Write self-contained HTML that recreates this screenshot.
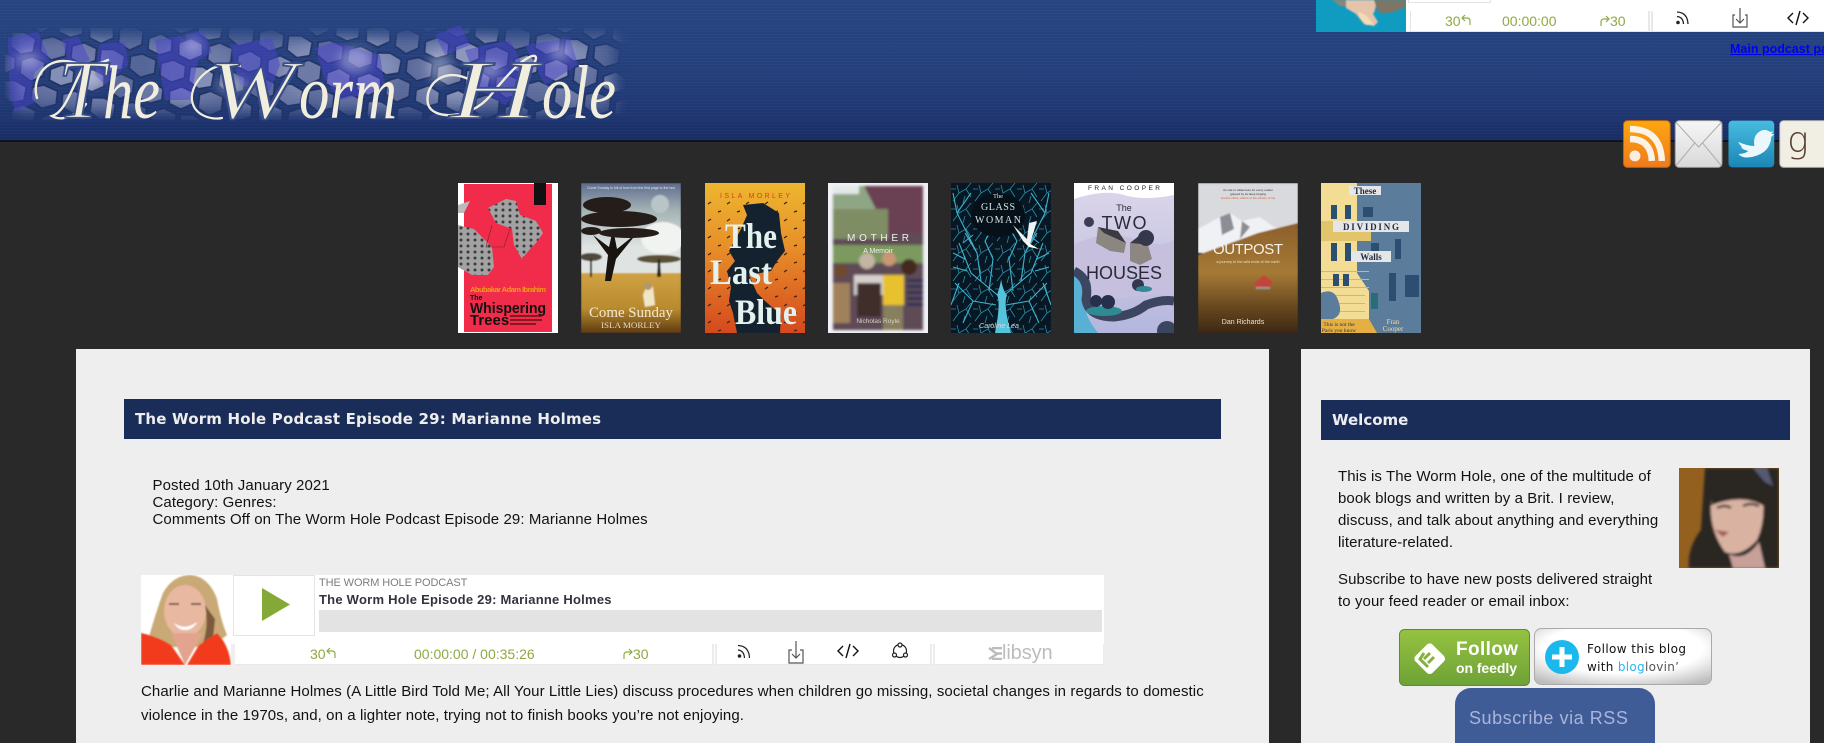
<!DOCTYPE html>
<html style="overflow:hidden;height:743px"><head><meta charset="utf-8"><title>The Worm Hole</title>
<style>
html,body{margin:0;padding:0}
body{width:1824px;height:743px;overflow:hidden;background:#292929;font-family:"Liberation Sans",Arial,sans-serif;color:#111}
#w{position:relative;width:1824px;height:743px;overflow:hidden}
.a{position:absolute}
.t{position:absolute;white-space:nowrap}
#hd{left:0;top:0;width:1824px;height:140px;background:repeating-linear-gradient(0deg,rgba(255,255,255,.018) 0 1px,rgba(0,0,0,.018) 1px 3px),linear-gradient(#284584 0,#26427f 40%,#213a76 75%,#1a2d66 100%);border-bottom:2px solid #0b1226}
.panel{background:#eee;top:349px;height:394px}
.bar{background:#1a2c58;color:#eee;font:bold 15px "DejaVu Sans",Verdana,sans-serif;height:40px;line-height:40px}
.ctl{color:#8fa944;font:14px "Liberation Sans",Arial,sans-serif}
.m{font-size:15px;line-height:17px;letter-spacing:.09px}
.p{font-size:15px;line-height:24px;letter-spacing:.09px}
.s{font-size:15px;line-height:22px;letter-spacing:.09px}
</style></head><body><div id="w">

<div class="a" id="hd"></div>

<svg class="a" style="left:0;top:0" width="700" height="140" viewBox="0 0 700 140">
<defs>
<pattern id="m" width="81" height="44" patternUnits="userSpaceOnUse" patternTransform="rotate(11) scale(1.120)">
<g stroke="#222d5a" stroke-width="1.500">
<polygon points="2,7 12,1 23,4 25,14 15,21 4,18" fill="#a3a9c8"/>
<polygon points="29,5 38,0 50,3 51,15 41,22 30,17" fill="#7f88b0"/>
<polygon points="56,8 66,2 77,6 78,16 68,21 57,18" fill="#969ec2"/>
<polygon points="-10,28 0,23 12,26 13,37 2,43 -9,39" fill="#8089b0"/>
<polygon points="71,28 81,23 93,26 94,37 83,43 72,39" fill="#8089b0"/>
<polygon points="16,26 27,24 38,28 38,40 27,44 17,39" fill="#9aa1c4"/>
<polygon points="43,27 53,23 66,26 67,38 55,44 44,38" fill="#747eaa"/>
</g>
</pattern>
<filter id="b"><feGaussianBlur stdDeviation="7"/></filter>
<filter id="b2"><feGaussianBlur stdDeviation="5"/></filter>
<filter id="p1"><feGaussianBlur stdDeviation=".7"/></filter>
<filter id="p2"><feGaussianBlur stdDeviation="1.200"/></filter>
<mask id="mk">
<g filter="url(#b)" fill="#fff">
<rect x="14" y="36" width="600" height="76" opacity=".6"/>
<ellipse cx="60" cy="68" rx="50" ry="32" opacity=".6"/>
<ellipse cx="195" cy="70" rx="40" ry="32" opacity=".55"/>
<ellipse cx="340" cy="70" rx="60" ry="30" opacity=".55"/>
<ellipse cx="470" cy="70" rx="60" ry="30" opacity=".6"/>
<ellipse cx="555" cy="65" rx="40" ry="24" opacity=".5"/>
</g>
</mask>
<clipPath id="cl"><rect x="5" y="24" width="625" height="104"/></clipPath>
</defs>
<g clip-path="url(#cl)">
<rect width="650" height="135" fill="url(#m)" mask="url(#mk)"/>
<g fill="#4a44cc" opacity=".5">
<polygon points="8,38 38,32 50,60 35,72 30,95 10,100"/>
<polygon points="8,82 30,80 35,102 15,112"/>
<polygon points="62,40 78,36 90,60 70,70"/>
<polygon points="100,44 125,42 128,65 105,85 95,75"/>
<polygon points="155,40 180,36 200,50 190,100 165,100"/>
<polygon points="185,35 203,30 212,52 195,62"/>
<polygon points="230,45 272,38 280,65 270,90 240,85"/>
<polygon points="315,48 335,42 380,55 385,90 340,100 325,80"/>
<polygon points="435,35 460,25 470,45 445,55"/>
<polygon points="465,50 510,40 530,80 505,105 480,90"/>
<polygon points="525,45 570,38 578,65 545,85"/>
</g>
<g fill="#dfe0f0" opacity=".4" filter="url(#b2)">
<ellipse cx="28" cy="60" rx="12" ry="8"/><ellipse cx="90" cy="78" rx="12" ry="8"/>
<ellipse cx="193" cy="45" rx="9" ry="7"/><ellipse cx="232" cy="85" rx="15" ry="8"/>
<ellipse cx="355" cy="60" rx="16" ry="12"/><ellipse cx="440" cy="68" rx="12" ry="14"/>
<ellipse cx="490" cy="70" rx="12" ry="8"/><ellipse cx="560" cy="52" rx="10" ry="9"/>
</g>
</g>
<g fill="none" stroke="#f1eedd" stroke-linecap="round">
<path d="M37 98C32 82 42 62 62 61C74 60 88 70 108 60" stroke-width="2.400"/>
<path d="M85 64C72 86 66 112 52 116C62 122 78 115 86 104" stroke-width="2.400"/>
<path d="M240 66C215 58 190 80 192 100C194 116 212 120 222 118" stroke-width="2.200"/>
<path d="M470 80C445 66 424 84 428 104C432 120 470 120 490 96C505 78 520 60 532 56C540 54 535 66 525 72" stroke-width="2.400"/>
</g>
<g fill="#f1eedd" font-family="'Liberation Serif',serif" font-style="italic" font-size="76">
<text x="103" y="118" textLength="57" lengthAdjust="spacingAndGlyphs">he</text>
<text x="299" y="118" textLength="98" lengthAdjust="spacingAndGlyphs">orm</text>
<text x="542" y="118" textLength="74" lengthAdjust="spacingAndGlyphs">ole</text>
</g>
<g fill="#f1eedd" stroke="#3a4f8a" stroke-width="1.800" font-family="'Liberation Serif',serif" font-style="italic" font-size="84">
<text x="58" y="118">T</text>
<text x="208" y="118" textLength="88" lengthAdjust="spacingAndGlyphs">W</text>
<text x="450" y="118" textLength="88" lengthAdjust="spacingAndGlyphs">H</text>
</g>
</svg>

<!-- top player -->
<div class="a" style="left:1406px;top:0;width:418px;height:32px;background:#fff;border-bottom:1px solid #e6e6e6;box-sizing:border-box"></div>
<div class="a" style="left:1408px;top:-1px;width:81px;height:2px;border:1px solid #e3e3e3;background:#fff"></div>
<div class="a" style="left:1410px;top:11px;width:1px;height:21px;background:#e3e3e3"></div>
<div class="a" style="left:1648px;top:11px;width:2px;height:21px;background:#e8e8e8"></div>
<div class="a" style="left:1651px;top:11px;width:2px;height:21px;background:#e8e8e8"></div>
<svg class="a" style="left:1316px;top:0" width="90" height="32" viewBox="0 0 90 32">
<rect width="90" height="32" fill="#0f9cc0"/>
<g filter="url(#p1)">
<path d="M16 0H42L36 7 24 6Z" fill="#8b8576"/>
<path d="M30 0H60Q60 10 57 14L62 22 58 26 48 24 40 14 30 8Z" fill="#e6c4ac"/>
<path d="M42 12Q50 14 54 20L58 25 50 25 44 18Z" fill="#f4dcb4"/>
<path d="M58 0H90V6Q74 16 62 12Z" fill="#7f7565"/>
</g>
</svg>
<span class="t ctl" style="left:1445px;top:13px">30</span>
<svg class="a" style="left:1460px;top:14px" width="12" height="14" fill="none" stroke="#8fa944" stroke-width="1.200"><path d="M5 1L2 4 5 7M2 4H7Q10 4 10 7V11"/></svg>
<span class="t ctl" style="left:1502px;top:13px">00:00:00</span>
<svg class="a" style="left:1599px;top:14px" width="12" height="14" fill="none" stroke="#8fa944" stroke-width="1.200"><path d="M7 2L10 5 7 8M10 5H5Q2 5 2 8V12"/></svg>
<span class="t ctl" style="left:1610px;top:13px">30</span>
<svg class="a" style="left:1670px;top:4px" width="154" height="28" fill="none" stroke="#222" stroke-width="1.200">
<circle cx="8" cy="18.500" r="1.800" fill="#222" stroke="none"/><path d="M7 12.500Q13 13 13.500 20M7 8Q17.500 8.500 18 20" stroke-width="1.300"/>
<path d="M65 11H63V23H77V11H75M70 4V19M66 15L70 19 74 15" stroke="#555"/>
<path d="M123 9L118 14 123 19M133 9L138 14 133 19M130 7L126 21" stroke="#111" stroke-width="1.400"/>
</svg>

<a class="t" href="#" style="left:1730px;top:42px;color:#00e;font:bold 12.500px 'Liberation Sans',Arial,sans-serif;text-decoration:underline">Main podcast page</a>

<!-- social icons -->
<svg class="a" style="left:1623px;top:120px" width="201" height="48" viewBox="0 0 202 48">
<defs>
<linearGradient id="or" x1="0" y1="0" x2="0" y2="1"><stop offset="0" stop-color="#fda70f"/><stop offset="1" stop-color="#ef7a1d"/></linearGradient>
<linearGradient id="ml" x1="0" y1="0" x2="0" y2="1"><stop offset="0" stop-color="#f6f6f6"/><stop offset="1" stop-color="#d9d9d9"/></linearGradient>
<linearGradient id="tw" x1="0" y1="0" x2="0" y2="1"><stop offset="0" stop-color="#48bcdf"/><stop offset="1" stop-color="#1b86b6"/></linearGradient>
</defs>
<rect x=".5" y=".5" width="47" height="47" rx="4" fill="url(#or)" stroke="#b9650f"/>
<circle cx="12" cy="36" r="5.500" fill="#fbeee0"/>
<path d="M7 19Q28 19 29 41M7 9Q38 9 39 41" fill="none" stroke="#fbf3e6" stroke-width="6.500"/>
<rect x="52.500" y=".5" width="47" height="47" rx="4" fill="url(#ml)" stroke="#999"/>
<path d="M53 2L76 27 99 2M53 46L72 23M99 46L80 23" fill="none" stroke="#aaa"/>
<rect x="106" y=".5" width="46" height="47" rx="4" fill="url(#tw)"/>
<path d="M116 22Q125 26 132 26Q130 14 140 10 144 9 148 12L151 11 149 14 152 14 149 17Q148 33 130 37 120 39 116 34 122 34 126 31 118 29 119 26 117 25 116 22Z" fill="#eaf8fc"/>
<rect x="157.500" y=".5" width="50" height="47" rx="4" fill="#f1efe4" stroke="#aaa"/>
<text x="165" y="32" font-family="'DejaVu Sans',sans-serif" font-size="36" font-weight="200" fill="#5a3f2e">g</text>
</svg>

<!-- books -->
<svg class="a" style="left:458px;top:183px" width="100" height="150" viewBox="0 0 100 150">
<defs><pattern id="bf" width="7" height="6" patternUnits="userSpaceOnUse"><rect width="7" height="6" fill="#a2a2a2"/><circle cx="3" cy="3" r="1.500" fill="#3c3c3c"/></pattern></defs>
<rect width="100" height="150" fill="#fff"/><rect x="6" y="1" width="88" height="148" fill="#f12c4a"/>
<rect x="76" y="0" width="12" height="22" fill="#111"/>
<path d="M30 25L48 16 58 18 62 32 78 38 85 50 78 60 72 66 64 76 56 62 54 46 38 40Z" fill="url(#bf)"/>
<path d="M0 42L16 46 34 64 36 84 30 92 14 92 0 84Z" fill="url(#bf)"/>
<path d="M0 22L12 18 6 30 0 30Z" fill="#bbb"/>
<path d="M34 42L28 64 46 64 52 46" fill="none" stroke="#7b2030" stroke-width=".6"/>
<text x="12" y="109" font-size="7.600" fill="#f59a1d" font-weight="bold" textLength="76">Abubakar Adam Ibrahim</text>
<text x="12" y="117" font-size="7" font-weight="bold" fill="#111">The</text>
<text x="12" y="130" font-size="15" font-weight="bold" fill="#111" textLength="76" lengthAdjust="spacingAndGlyphs">Whispering</text>
<text x="12" y="142" font-size="15" font-weight="bold" fill="#111">Trees</text>
<g stroke="#611" stroke-width="1.500"><path d="M52 133H84M52 137H84M52 141H78"/></g>
</svg>

<svg class="a" style="left:581px;top:183px" width="100" height="150" viewBox="0 0 100 150">
<defs><linearGradient id="s2" x1="0" y1="0" x2="0" y2="1"><stop offset="0" stop-color="#5d6c8e"/><stop offset=".3" stop-color="#a4b3b5"/><stop offset=".7" stop-color="#dfe4e2"/></linearGradient>
<linearGradient id="g2" x1="0" y1="0" x2="0" y2="1"><stop offset="0" stop-color="#d0a243"/><stop offset=".6" stop-color="#b88a2e"/><stop offset="1" stop-color="#5e3a12"/></linearGradient></defs>
<g filter="url(#p1)">
<rect width="100" height="92" fill="url(#s2)"/><circle cx="79" cy="21" r="9" fill="#b9c4c6"/>
<ellipse cx="82" cy="55" rx="22" ry="16" fill="#f1f3f1"/>
<rect y="90" width="100" height="60" fill="url(#g2)"/>
<ellipse cx="78" cy="76" rx="22" ry="4" fill="#5c5039"/><path d="M77 76H79L80 94H76Z" fill="#2a2018"/>
<ellipse cx="10" cy="74" rx="11" ry="4" fill="#4e493c"/><path d="M9 76H11L11 94H9Z" fill="#2a2018"/>
<path d="M62 112L66 102 72 104 74 122 64 124Z" fill="#f0e7c6"/><circle cx="67" cy="103" r="4" fill="#b09968"/>
</g>
<path d="M24 98L27 72 12 52 28 64 32 46 36 66 56 50 35 76 30 98Z" fill="#1a1410"/>
<g fill="#241d19"><ellipse cx="26" cy="22" rx="24" ry="8"/><ellipse cx="38" cy="36" rx="38" ry="8"/><ellipse cx="48" cy="50" rx="30" ry="5"/><ellipse cx="10" cy="48" rx="10" ry="4"/></g>
<text x="50" y="134" text-anchor="middle" font-family="'Liberation Serif',serif" font-size="14.500" fill="#f4ead4" textLength="84" lengthAdjust="spacingAndGlyphs">Come Sunday</text>
<text x="50" y="145" text-anchor="middle" font-family="'Liberation Serif',serif" font-size="8" fill="#e6d7bd" textLength="60" lengthAdjust="spacingAndGlyphs">ISLA MORLEY</text>
<text x="50" y="6" text-anchor="middle" font-size="3.500" fill="#e5e5e5">Come Sunday is full of love from the first page to the last</text>
</svg>

<svg class="a" style="left:705px;top:183px" width="100" height="150" viewBox="0 0 100 150">
<defs><linearGradient id="o3" x1="0" y1="0" x2="0" y2="1"><stop offset="0" stop-color="#edb62f"/><stop offset=".4" stop-color="#e8922a"/><stop offset="1" stop-color="#d5491d"/></linearGradient>
<pattern id="sp" width="19" height="17" patternUnits="userSpaceOnUse"><path d="M3 4L6 2M13 12L16 11" stroke="#3a2416" stroke-width="1.300"/></pattern></defs>
<rect width="100" height="150" fill="url(#o3)"/><rect y="18" width="100" height="132" fill="url(#sp)"/>
<path d="M38 22L58 20 74 30 76 50 80 68 72 78 66 88 44 92 52 110 60 118 76 132 75 150 32 150 28 130 24 118 26 104 22 88 30 78 24 68 36 46 42 32Z" fill="#14212e"/>
<text x="50" y="15" text-anchor="middle" font-size="7" fill="#d5401c" textLength="70">ISLA MORLEY</text>
<g font-family="'Liberation Serif',serif" fill="#e3f1ef" font-weight="bold"><text x="20" y="65" font-size="36" textLength="52" lengthAdjust="spacingAndGlyphs">The</text>
<text x="5" y="101" font-size="36" textLength="62" lengthAdjust="spacingAndGlyphs">Last</text>
<text x="30" y="141" font-size="36" textLength="62" lengthAdjust="spacingAndGlyphs">Blue</text></g>
</svg>

<svg class="a" style="left:828px;top:183px" width="100" height="150" viewBox="0 0 100 150">
<rect width="100" height="150" fill="#eff1f6"/>
<g filter="url(#p2)">
<rect x="5" y="3" width="90" height="144" fill="#5f4c57"/>
<rect x="5" y="3" width="90" height="24" fill="#8fa684"/><rect x="5" y="3" width="26" height="8" fill="#e3e9e8"/>
<path d="M36 3H95V50H60Z" fill="#6a4152"/>
<rect x="5" y="26" width="55" height="30" fill="#7f8d65"/>
<rect x="5" y="62" width="90" height="18" fill="#7c9a5e"/>
<circle cx="13" cy="88" r="7" fill="#6e4a32"/><circle cx="39" cy="78" r="8" fill="#c2b5a4"/><circle cx="61" cy="76" r="7" fill="#c89774"/><circle cx="81" cy="84" r="8" fill="#43291e"/>
<rect x="5" y="100" width="17" height="40" fill="#a0815b"/><rect x="26" y="92" width="30" height="20" fill="#d5d0cc"/>
<rect x="29" y="100" width="24" height="34" fill="#3f2f2b"/><rect x="55" y="92" width="21" height="30" fill="#e8c22d"/><rect x="55" y="122" width="20" height="25" fill="#887f5e"/>
<g fill="#2c3358"><rect x="79" y="96" width="16" height="3"/><rect x="79" y="102" width="16" height="3"/><rect x="79" y="108" width="16" height="3"/><rect x="79" y="114" width="16" height="3"/><rect x="79" y="120" width="16" height="3"/></g>
</g>
<text x="50" y="58" text-anchor="middle" font-size="10" fill="#f2efec" textLength="62">MOTHER</text>
<text x="50" y="70" text-anchor="middle" font-size="7" fill="#f2efec">A Memoir</text>
<text x="50" y="140" text-anchor="middle" font-size="6.500" fill="#d6d1c4">Nicholas Royle</text>
</svg>

<svg class="a" style="left:951px;top:183px" width="100" height="150" viewBox="0 0 100 150">
<defs><pattern id="br" width="22" height="20" patternUnits="userSpaceOnUse"><path d="M2 18L8 10 6 2M8 10L15 6 20 0M15 6L20 14M12 20L14 13M0 6L5 6" fill="none" stroke="#2c8aa4" stroke-width=".8"/></pattern></defs>
<rect width="100" height="150" fill="#071824"/><rect width="100" height="150" fill="url(#br)"/>
<g fill="none" stroke="#3fb2cc" stroke-width="1.100">
<path d="M50 150L50 115 20 90 8 60M50 115L80 90 92 60M45 122L22 118 4 100M55 122L78 118 96 100M30 98L26 70 14 50M70 98L74 70 86 50M38 108L42 76 34 58M62 108L58 76 66 58M14 76L2 70M86 76L98 70M22 118L12 140M78 118L88 140M26 70L6 30 2 10M74 70L94 30 98 10"/>
<path d="M8 100L0 122M92 100L100 122M34 58L40 48M66 58L60 48M6 30L20 10M94 30L80 10M16 88L2 84M84 88L98 84M12 60L22 52M88 60L78 52"/>
</g>
<path d="M44 150Q50 120 46 112 50 100 50 96 52 108 56 112 52 122 60 150Z" fill="#55c3dc"/>
<ellipse cx="47" cy="32" rx="27" ry="22" fill="#051018"/>
<g text-anchor="middle" fill="#d9e4e6" font-family="'Liberation Serif',serif"><text x="47" y="15" font-size="6.500">The</text><text x="47" y="27" font-size="10" textLength="34">GLASS</text><text x="47" y="40" font-size="10" textLength="46">WOMAN</text></g>
<path d="M62 42L76 56 78 40 86 38 78 64 72 58Z" fill="#eef4f4"/><path d="M74 58L88 66 78 64Z" fill="#fff"/>
<text x="48" y="145" text-anchor="middle" font-size="7" font-style="italic" fill="#cfdde0">Caroline Lea</text>
</svg>

<svg class="a" style="left:1074px;top:183px" width="100" height="150" viewBox="0 0 100 150">
<defs><linearGradient id="l6" x1="0" y1="0" x2="0" y2="1"><stop offset="0" stop-color="#ddd7ea"/><stop offset="1" stop-color="#b4b6dd"/></linearGradient></defs>
<rect width="100" height="150" fill="url(#l6)"/><path d="M0 0H100V12Q70 18 50 12T0 16Z" fill="#fff"/>
<path d="M0 62Q30 46 60 56T100 56V110L0 118Z" fill="#c6c0de"/>
<path d="M0 86Q26 94 12 118 8 130 24 150H0Z" fill="#58b0d4"/>
<path d="M0 88Q16 96 12 116 14 134 40 134 60 132 72 122 88 116 100 118" fill="none" stroke="#3d4660" stroke-width="9"/>
<text x="50" y="7" text-anchor="middle" font-size="6.500" fill="#222" textLength="72">FRAN COOPER</text>
<text x="50" y="28" text-anchor="middle" font-size="9" fill="#2b2b36">The</text>
<text x="50" y="46" text-anchor="middle" font-size="18" fill="#2a2a3a" textLength="45">TWO</text>
<text x="50" y="96" text-anchor="middle" font-size="18" fill="#2a2a3a" textLength="76">HOUSES</text>
<path d="M24 44L44 54 52 60 50 70 36 68 22 60Z" fill="#8c8680"/><path d="M24 44L44 48 52 60 30 50Z" fill="#3a3a40"/>
<path d="M56 60L74 62 78 76 66 82 56 78Z" fill="#8d8683"/><path d="M56 60L66 52 76 62Z" fill="#3b3b41"/>
<circle cx="15" cy="39" r="5" fill="#3b3d50"/><circle cx="72" cy="55" r="8" fill="#35384a"/><circle cx="64" cy="102" r="6" fill="#33384f"/>
<ellipse cx="70" cy="106" rx="8" ry="3" fill="#2f8a94"/><ellipse cx="30" cy="128" rx="18" ry="5" fill="#2e8b94"/><circle cx="22" cy="118" r="6" fill="#27304a"/><circle cx="34" cy="119" r="7" fill="#27304a"/><circle cx="93" cy="148" r="10" fill="#3a4560"/>
</svg>

<svg class="a" style="left:1198px;top:183px" width="100" height="150" viewBox="0 0 100 150">
<defs><linearGradient id="g7" x1="0" y1="0" x2="0" y2="1"><stop offset="0" stop-color="#8c5f2a"/><stop offset=".45" stop-color="#a67a36"/><stop offset=".75" stop-color="#6a4a20"/><stop offset="1" stop-color="#3c2711"/></linearGradient></defs>
<g filter="url(#p1)">
<rect width="100" height="70" fill="#d9dadd"/>
<path d="M0 46L22 34 32 30 44 38 62 34 76 44 100 48V70H0Z" fill="#f0f1f4"/><path d="M22 34L32 30 36 46 24 52ZM44 38L52 44 42 56Z" fill="#8b8e94"/>
<path d="M0 72L60 50 100 40V150H0Z" fill="url(#g7)"/>
<path d="M56 100L66 92 74 98 74 103 58 105Z" fill="#c2453a"/><path d="M58 104H72V106H58Z" fill="#9c9a94"/>
</g>
<text x="50" y="71" text-anchor="middle" font-size="15" fill="#f4f3ee" textLength="70">OUTPOST</text>
<text x="50" y="80" text-anchor="middle" font-size="3.800" fill="#e6dccc">a journey to the wild ends of the earth</text>
<text x="50" y="8" text-anchor="middle" font-size="3" fill="#333">An ode to wilderness for every reader</text>
<text x="50" y="12" text-anchor="middle" font-size="3" fill="#333">gripped by its deep longing</text>
<text x="50" y="16" text-anchor="middle" font-size="3" fill="#d4622a">Horatio Clare, author of the Library of Ice</text>
<text x="45" y="141" text-anchor="middle" font-size="7" fill="#ece4d4">Dan Richards</text>
</svg>

<svg class="a" style="left:1321px;top:183px" width="100" height="150" viewBox="0 0 100 150">
<rect width="100" height="150" fill="#f3dc93"/>
<path d="M36 0H100V150H48V108L36 90Z" fill="#5b7c9b"/>
<g fill="#c9b87a"><rect y="88" width="48" height="1"/><rect y="96" width="48" height="1"/><rect y="104" width="48" height="1"/><rect y="112" width="44" height="1"/><rect y="120" width="44" height="1"/><rect y="128" width="44" height="1"/></g>
<path d="M0 38H50V58H0Z" fill="#e2c46a"/>
<g fill="#2c4e70"><rect x="10" y="22" width="6" height="14"/><rect x="24" y="22" width="6" height="14"/><rect x="10" y="60" width="6" height="18"/><rect x="24" y="60" width="6" height="18"/><rect x="12" y="91" width="6" height="12"/><rect x="22" y="91" width="6" height="12"/><rect x="68" y="90" width="7" height="28"/><rect x="84" y="92" width="14" height="22"/><rect x="42" y="24" width="10" height="10"/><rect x="50" y="60" width="8" height="14"/><rect x="74" y="56" width="6" height="20"/></g>
<rect x="28" y="3" width="32" height="9" fill="#e4e6e8"/><text x="44" y="11" text-anchor="middle" font-size="9" font-family="'Liberation Serif',serif" fill="#1f2b40" font-weight="bold">These</text>
<rect x="12" y="38" width="76" height="11" fill="#e4e6e8"/><text x="50" y="47" text-anchor="middle" font-size="9" font-family="'Liberation Serif',serif" fill="#1f2b40" font-weight="bold" textLength="56">DIVIDING</text>
<rect x="30" y="68" width="40" height="11" fill="#e4e6e8"/><text x="50" y="77" text-anchor="middle" font-size="9" font-family="'Liberation Serif',serif" fill="#1f2b40" font-weight="bold">Walls</text>
<path d="M0 110Q14 104 18 120 22 132 12 136H0Z" fill="#5b7c9b"/>
<path d="M0 136H48L56 150H0Z" fill="#e5b043"/>
<path d="M50 110H57V126H50Z" fill="#2a6d7a"/>
<text x="18" y="143" font-size="5.500" text-anchor="middle" font-family="'Liberation Serif',serif" fill="#26324a">This is not the</text>
<text x="18" y="149" font-size="5.500" text-anchor="middle" font-family="'Liberation Serif',serif" fill="#26324a">Paris you know</text>
<text x="72" y="141" font-size="7" text-anchor="middle" font-family="'Liberation Serif',serif" fill="#f0dfa8">Fran</text>
<text x="72" y="148" font-size="7" text-anchor="middle" font-family="'Liberation Serif',serif" fill="#f0dfa8">Cooper</text>
</svg>

<!-- panels -->
<div class="a panel" style="left:76px;width:1193px"></div>
<div class="a panel" style="left:1301px;width:509px"></div>

<div class="a bar" style="left:124px;top:399px;width:1097px;padding-left:11px;box-sizing:border-box;letter-spacing:.18px">The Worm Hole Podcast Episode 29: Marianne Holmes</div>
<div class="a bar" style="left:1321px;top:400px;width:469px;padding-left:11px;box-sizing:border-box">Welcome</div>

<span class="t m" style="left:152.500px;top:477px">Posted 10th January 2021</span>
<span class="t m" style="left:152.500px;top:494px">Category: Genres:</span>
<span class="t m" style="left:152.500px;top:511px">Comments Off on The Worm Hole Podcast Episode 29: Marianne Holmes</span>

<!-- player -->
<div class="a" style="left:141px;top:575px;width:963px;height:90px;background:#fff"></div>
<div class="a" style="left:231px;top:635px;width:4px;height:30px;background:#eee"></div>
<div class="a" style="left:231px;top:635px;width:873px;height:9px;background:#fff"></div>
<div class="a" style="left:235px;top:664px;width:869px;height:1px;background:#e8e8e8"></div>
<svg class="a" style="left:141px;top:575px" width="90" height="90" viewBox="0 0 90 90">
<rect width="90" height="90" fill="#fff"/>
<g filter="url(#p1)">
<path d="M8 62Q14 40 22 18 32 0 50 0 68 2 76 24 80 46 86 60L70 72 24 72Z" fill="#c9a975"/>
<ellipse cx="44" cy="36" rx="21" ry="26" fill="#e8b9a0"/>
<path d="M30 58L44 90 62 58Z" fill="#e2a48e"/>
<path d="M64 30Q68 50 62 68L72 64 74 44Z" fill="#7d5a3c"/>
<path d="M33 48Q44 56 56 47 52 55 44 55 37 55 33 48Z" fill="#fff"/>
<path d="M28 29H38M50 29H60" stroke="#7a5b4c" stroke-width="2"/>
<path d="M0 58Q18 62 30 70L44 90H0ZM58 70L76 58Q88 70 90 90H46Z" fill="#f23a1a"/>
</g>
</svg>
<div class="a" style="left:233px;top:575px;width:80px;height:59px;border:1px solid #e4e4e4;background:#fff"></div>
<svg class="a" style="left:262px;top:588px" width="28" height="33"><path d="M0 0L28 16.500 0 33Z" fill="#85a937"/></svg>
<span class="t" style="left:319px;top:575px;font:11px/16px 'Liberation Sans',sans-serif;color:#7d7d7d;letter-spacing:-.1px">THE WORM HOLE PODCAST</span>
<span class="t" style="left:319px;top:591px;font:bold 13px/17px 'Liberation Sans',sans-serif;color:#33333d;letter-spacing:.24px">The Worm Hole Episode 29: Marianne Holmes</span>
<div class="a" style="left:319px;top:610px;width:783px;height:22px;background:#e3e3e3"></div>
<div class="a" style="left:712px;top:644px;width:2px;height:21px;background:#ececec"></div>
<div class="a" style="left:715px;top:644px;width:2px;height:21px;background:#ececec"></div>
<div class="a" style="left:930px;top:644px;width:2px;height:21px;background:#ececec"></div>
<div class="a" style="left:933px;top:644px;width:2px;height:21px;background:#ececec"></div>
<div class="a" style="left:1103px;top:644px;width:1px;height:21px;background:#ececec"></div>
<span class="t ctl" style="left:310px;top:646px">30</span>
<svg class="a" style="left:325px;top:647px" width="12" height="14" fill="none" stroke="#8fa944" stroke-width="1.200"><path d="M5 1L2 4 5 7M2 4H7Q10 4 10 7V11"/></svg>
<span class="t ctl" style="left:414px;top:646px">00:00:00 / 00:35:26</span>
<svg class="a" style="left:622px;top:647px" width="12" height="14" fill="none" stroke="#8fa944" stroke-width="1.200"><path d="M7 2L10 5 7 8M10 5H5Q2 5 2 8V12"/></svg>
<span class="t ctl" style="left:633px;top:646px">30</span>
<svg class="a" style="left:730px;top:638px" width="190" height="27" fill="none" stroke="#222" stroke-width="1.200">
<circle cx="9.500" cy="18" r="1.800" fill="#222" stroke="none"/><path d="M8 12Q14 12.500 14.500 20M8 7.500Q19 8 19.500 20"/>
<path d="M62 12H59V25H73V12H70M66 3V20M62 16L66 20 70 16" stroke="#555"/>
<path d="M113 8L108 13 113 18M123 8L128 13 123 18M120 6L116 20" stroke="#111" stroke-width="1.400"/>
<circle cx="170" cy="13" r="6.500"/><circle cx="170" cy="7" r="2" fill="#fff"/><circle cx="164.500" cy="17" r="2" fill="#fff"/><circle cx="175.500" cy="17" r="2" fill="#fff"/>
</svg>
<span class="t" style="left:1002px;top:642px;font:20px/22px 'Liberation Sans',sans-serif;color:#bcbcbc;letter-spacing:-.1px">libsyn</span>
<svg class="a" style="left:988px;top:647px" width="14" height="13" fill="none" stroke="#bcbcbc" stroke-width="2.400"><path d="M1 1L9 7 1 12M4 1H14M8 6.500H14M4 12H14"/></svg>

<span class="t p" style="left:141px;top:680px">Charlie and Marianne Holmes (A Little Bird Told Me; All Your Little Lies) discuss procedures when children go missing, societal changes in regards to domestic</span>
<span class="t p" style="left:141px;top:704px">violence in the 1970s, and, on a lighter note, trying not to finish books you’re not enjoying.</span>

<!-- sidebar -->
<span class="t s" style="left:1338px;top:466px">This is The Worm Hole, one of the multitude of</span>
<span class="t s" style="left:1338px;top:488px">book blogs and written by a Brit. I review,</span>
<span class="t s" style="left:1338px;top:510px">discuss, and talk about anything and everything</span>
<span class="t s" style="left:1338px;top:532px">literature-related.</span>
<span class="t s" style="left:1338px;top:569px">Subscribe to have new posts delivered straight</span>
<span class="t s" style="left:1338px;top:591px">to your feed reader or email inbox:</span>

<svg class="a" style="left:1679px;top:468px" width="100" height="100" viewBox="0 0 100 100">
<rect width="100" height="100" fill="#94601f"/>
<g filter="url(#p2)">
<path d="M26 0H100V100H10Q8 80 22 62 24 30 26 0Z" fill="#2c2522"/>
<path d="M32 34Q54 20 84 32 86 54 78 72 62 90 46 84 30 62 32 34Z" fill="#d9b2a2"/>
<path d="M30 38Q46 14 62 12 76 10 88 40 66 24 30 38Z" fill="#2c2522"/>
<path d="M38 40Q46 36 52 40M64 38Q72 34 80 38" stroke="#4a3a36" stroke-width="2.500" fill="none"/>
<path d="M36 62L50 64 44 69Z" fill="#9f5f52"/>
<path d="M74 0H88L94 18 86 14Z" fill="#555a72"/>
<path d="M50 86Q66 94 80 74L86 100H54Z" fill="#c7a09a"/>
</g>
</svg>

<svg class="a" style="left:1398px;top:627px" width="316" height="60" viewBox="0 0 316 60">
<defs>
<linearGradient id="fe" x1="0" y1="0" x2="0" y2="1"><stop offset="0" stop-color="#96c241"/><stop offset="1" stop-color="#6ea237"/></linearGradient>
<radialGradient id="bl" cx=".5" cy=".35" r=".75"><stop offset=".6" stop-color="#fff"/><stop offset="1" stop-color="#bdbdbd"/></radialGradient>
</defs>
<rect x="1.500" y="2.500" width="130" height="56" rx="5" fill="url(#fe)" stroke="#5d8a30"/>
<rect x="20" y="20" width="24" height="24" rx="4" transform="rotate(45 31 31) translate(0 -1)" fill="#fff"/>
<path d="M26 32L32 26M30 36L36 30M26 26L22 32 30 40" stroke="#86b23c" stroke-width="3" fill="none"/>
<text x="58" y="28" font-family="'Liberation Sans',sans-serif" font-weight="bold" font-size="19" fill="#fff" textLength="62">Follow</text>
<text x="58" y="46" font-family="'Liberation Sans',sans-serif" font-weight="bold" font-size="14" fill="#fff" textLength="61">on feedly</text>
<rect x="136.500" y="1.500" width="177" height="56" rx="7" fill="url(#bl)" stroke="#aaa"/>
<circle cx="164" cy="30" r="17" fill="#1bb8ee"/>
<path d="M164 20V40M154 30H174" stroke="#fff" stroke-width="5"/>
<text x="189" y="26" font-family="'DejaVu Sans',sans-serif" font-size="12" fill="#111" textLength="99">Follow this blog</text>
<text x="189" y="44" font-family="'DejaVu Sans',sans-serif" font-size="12" fill="#111" textLength="92">with <tspan fill="#25b6ea">blog</tspan><tspan fill="#555">lovin’</tspan></text>
</svg>
<div class="a" style="left:1455px;top:688px;width:200px;height:70px;border-radius:16px;background:#405c97"></div>
<span class="t" style="left:1469px;top:707px;font:18px/22px 'Liberation Sans',sans-serif;color:#a8b4dc;letter-spacing:.55px">Subscribe via RSS</span>

</div></body></html>
